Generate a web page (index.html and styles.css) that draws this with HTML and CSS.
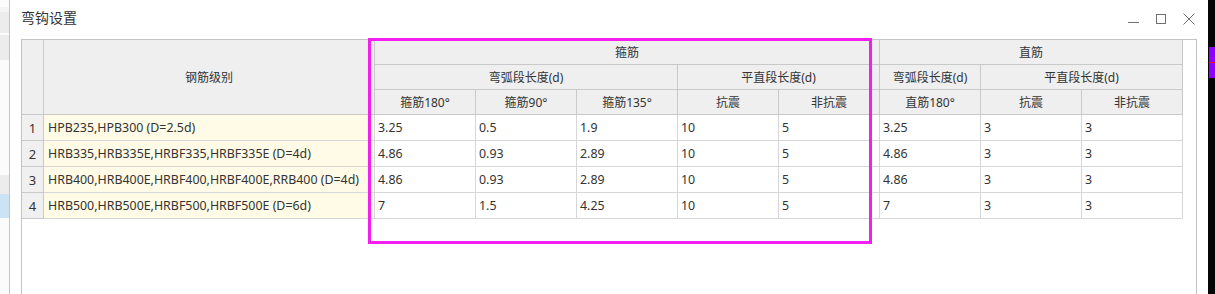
FILE: index.html
```html
<!DOCTYPE html>
<html lang="zh-CN">
<head>
    <meta charset="UTF-8">
    <title>弯钩设置</title>
    <link rel="stylesheet" href="styles.css">
</head>
<body>
    <div class="screen">
        <div class="backwin">
            <div class="band band-light"></div>
            <div class="band band-gray"></div>
            <div class="band band-gap"></div>
            <div class="band band-gray2"></div>
            <div class="band band-space"></div>
            <div class="band band-gray3"></div>
            <div class="band band-blue"></div>
        </div>

        <div class="dialog">
            <div class="titlebar">
                <span class="title">弯钩设置</span>
                <div class="controls">
                    <svg class="ctl" width="12" height="12" viewBox="0 0 12 12"><line x1="1" y1="9.5" x2="12" y2="9.5" stroke="#707070" stroke-width="1"/></svg>
                    <svg class="ctl" width="12" height="12" viewBox="0 0 12 12"><rect x="1.5" y="1.5" width="9" height="9" fill="none" stroke="#707070" stroke-width="1"/></svg>
                    <svg class="ctl" width="12" height="12" viewBox="0 0 12 12"><path d="M0.5 0.5 L11.5 11.5 M11.5 0.5 L0.5 11.5" stroke="#707070" stroke-width="1"/></svg>
                </div>
            </div>

            <div class="grid">
                <table class="hooks">
                    <colgroup>
                        <col class="c-num">
                        <col class="c-name">
                        <col class="c-val"><col class="c-val"><col class="c-val"><col class="c-val">
                        <col class="c-val"><col class="c-val"><col class="c-val"><col class="c-val">
                    </colgroup>
                    <thead>
                        <tr>
                            <th rowspan="3"></th>
                            <th rowspan="3">钢筋级别</th>
                            <th colspan="5">箍筋</th>
                            <th colspan="3">直筋</th>
                        </tr>
                        <tr>
                            <th colspan="3">弯弧段长度(d)</th>
                            <th colspan="2">平直段长度(d)</th>
                            <th>弯弧段长度(d)</th>
                            <th colspan="2">平直段长度(d)</th>
                        </tr>
                        <tr>
                            <th>箍筋180°</th>
                            <th>箍筋90°</th>
                            <th>箍筋135°</th>
                            <th>抗震</th>
                            <th>非抗震</th>
                            <th>直筋180°</th>
                            <th>抗震</th>
                            <th>非抗震</th>
                        </tr>
                    </thead>
                    <tbody>
                        <tr>
                            <td class="num">1</td>
                            <td class="name">HPB235,HPB300 (D=2.5d)</td>
                            <td>3.25</td><td>0.5</td><td>1.9</td><td>10</td><td>5</td>
                            <td>3.25</td><td>3</td><td>3</td>
                        </tr>
                        <tr>
                            <td class="num">2</td>
                            <td class="name">HRB335,HRB335E,HRBF335,HRBF335E (D=4d)</td>
                            <td>4.86</td><td>0.93</td><td>2.89</td><td>10</td><td>5</td>
                            <td>4.86</td><td>3</td><td>3</td>
                        </tr>
                        <tr>
                            <td class="num">3</td>
                            <td class="name">HRB400,HRB400E,HRBF400,HRBF400E,RRB400 (D=4d)</td>
                            <td>4.86</td><td>0.93</td><td>2.89</td><td>10</td><td>5</td>
                            <td>4.86</td><td>3</td><td>3</td>
                        </tr>
                        <tr>
                            <td class="num">4</td>
                            <td class="name">HRB500,HRB500E,HRBF500,HRBF500E (D=6d)</td>
                            <td>7</td><td>1.5</td><td>4.25</td><td>10</td><td>5</td>
                            <td>7</td><td>3</td><td>3</td>
                        </tr>
                    </tbody>
                </table>
            </div>

            <!-- marca de resaltado sobre las columnas de estribos -->
            <div class="highlight"></div>
        </div>

        <div class="edge">
            <div class="edge-mark"></div>
        </div>
    </div>
</body>
</html>
```

FILE: styles.css
```css
html, body {
    margin: 0;
    background-color: white;
}

body {
    font-family: "Noto Sans", "Noto Sans CJK SC", sans-serif;
    color: #333;
}

.screen {
    display: flex;
    width: 1215px;
    height: 294px;
    overflow: hidden;
}

/* ventana de fondo a la izquierda */
.backwin {
    flex: 0 0 9px;
    border-right: 1px solid #c4c4c4;
    background-color: #fbfbfb;
    display: flex;
    flex-direction: column;
}

.band { width: 100%; }
.band-light { height: 5px; margin-top: 7px; background-color: #f4f4f4; }
.band-gray { height: 21px; background-color: #ececec; }
.band-gap { height: 2px; background-color: #fbfbfb; }
.band-gray2 { height: 25px; background-color: #ececec; }
.band-space { height: 115px; }
.band-gray3 { height: 19px; background-color: #ececec; }
.band-blue { height: 24px; background-color: #cce3f6; }

.dialog {
    position: relative;
    flex: 0 0 1198px;
    height: 294px;
    background-color: white;
    display: flex;
    flex-direction: column;
}

.titlebar {
    height: 39px;
    display: flex;
    justify-content: space-between;
    align-items: flex-start;
    padding: 0 13px 0 11px;
}

.title {
    font-size: 14px;
    line-height: 18px;
    margin-top: 9px;
    color: #333;
}

.controls {
    display: flex;
    gap: 16px;
    margin-top: 13px;
}

.ctl { display: block; }

.grid {
    flex: 1;
    margin-left: 11px;
    width: 1174px;
    border: 1px solid #c4c4c4;
    border-bottom: none;
}

.hooks {
    table-layout: fixed;
    border-collapse: separate;
    border-spacing: 0;
    width: 1161px;
    font-size: 12px;
}

.c-num { width: 22px; }
.c-name { width: 331px; }
.c-val { width: 101px; }

.hooks th {
    height: 24px;
    padding: 0;
    font-weight: normal;
    text-align: center;
    background-color: #efefef;
    border-right: 1px solid #c9c9c9;
    border-bottom: 1px solid #c9c9c9;
    color: #333;
}

.hooks td {
    height: 25px;
    padding: 0 0 0 3px;
    text-align: left;
    font-size: 12.4px;
    border-right: 1px solid #d6d6d6;
    border-bottom: 1px solid #d6d6d6;
    color: #333;
    white-space: nowrap;
}

.hooks td.num {
    padding: 0;
    text-align: center;
    background-color: #f0f0f0;
    border-color: #c9c9c9;
    font-size: 13px;
}

.hooks td.name {
    background-color: #fffbe6;
    padding-left: 4px;
}

.highlight {
    position: absolute;
    left: 358px;
    top: 38px;
    width: 504px;
    height: 206px;
    box-sizing: border-box;
    border: 3px solid #f21ff0;
}

/* borde oscuro de la derecha */
.edge {
    flex: 0 0 7px;
    height: 294px;
    background-color: #050505;
    padding-top: 47px;
    box-sizing: border-box;
}

.edge-mark {
    margin-left: 1px;
    height: 31px;
    background: linear-gradient(#9000ff 0, #9000ff 15px, #ff1010 15px, #ff1010 16px, #9000ff 16px);
}
```
